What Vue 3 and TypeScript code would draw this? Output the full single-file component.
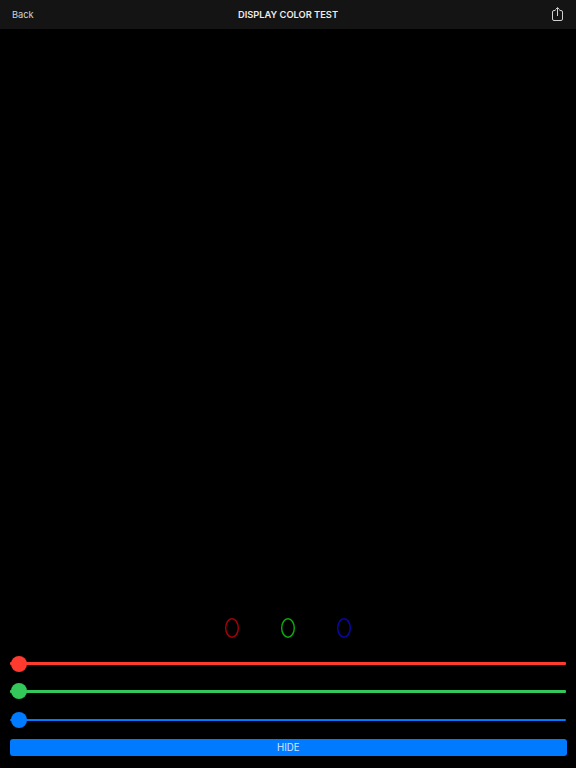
<script setup lang="ts">
const rings = [
  { id: 'red', color: '#a80008' },
  { id: 'green', color: '#0cac10' },
  { id: 'blue', color: '#0808ac' },
]
const sliders = [
  { id: 'red', color: '#ff3b30', h: 3 },
  { id: 'green', color: '#34c759', h: 3 },
  { id: 'blue', color: '#007aff', h: 2 },
]
</script>

<template>
  <div class="page">
    <header class="nav">
      <span class="back">Back</span>
      <span class="title">DISPLAY COLOR TEST</span>
      <svg class="share" width="11" height="14" viewBox="0 0 11 14" fill="none" stroke="#d0d0d0" stroke-width="1">
        <path d="M3.4 3.5H2a1.5 1.5 0 0 0-1.5 1.5v7a1.5 1.5 0 0 0 1.5 1.5h7a1.5 1.5 0 0 0 1.5-1.5V5A1.5 1.5 0 0 0 9 3.5H7.6" />
        <path d="M5.5 9V.8M3.4 2.6 5.5.6l2.1 2" />
      </svg>
    </header>
    <main class="canvas"></main>
    <div class="rings">
      <svg v-for="r in rings" :key="r.id" class="ring" width="14" height="20" viewBox="0 0 14 20">
        <ellipse cx="7" cy="10" rx="6.3" ry="9.2" fill="none" :stroke="r.color" stroke-width="1.4" />
      </svg>
    </div>
    <div class="sliders">
      <div v-for="s in sliders" :key="s.id" class="slider">
        <div class="track" :style="{ background: s.color, height: s.h + 'px' }"></div>
        <div class="thumb" :style="{ background: s.color }"></div>
      </div>
    </div>
    <button class="hide">HIDE</button>
  </div>
</template>

<style>
html, body { margin: 0; background: #000; }
</style>

<style scoped>
.page {
  width: 576px;
  height: 768px;
  background: #000;
  display: flex;
  flex-direction: column;
  overflow: hidden;
  font-family: Inter, "Liberation Sans", sans-serif;
}
.nav {
  height: 29px;
  flex: none;
  box-sizing: border-box;
  background: #141414;
  display: flex;
  align-items: center;
  justify-content: space-between;
  padding: 0 13px 1px 12px;
  position: relative;
}
.back { font-size: 9.3px; color: #d2d2d2; }
.title {
  position: absolute;
  left: 0;
  right: 0;
  text-align: center;
  font-size: 9.3px;
  font-weight: 600;
  color: #ececec;
}
.canvas { flex: 1; }
.rings {
  display: flex;
  justify-content: center;
  gap: 41.7px;
  padding-bottom: 17px;
}
.ring { flex: none; }
.sliders {
  display: flex;
  flex-direction: column;
  gap: 10.3px;
  padding: 0 10px;
}
.slider {
  position: relative;
  height: 17px;
  display: flex;
  align-items: center;
}
.slider:last-child { margin-top: 1.7px; }
.track { width: 100%; border-radius: 1px; }
.thumb {
  position: absolute;
  left: 1px;
  top: 0.3px;
  width: 16px;
  height: 16px;
  border-radius: 50%;
}
.hide {
  margin: 10.5px 9px 12px 9.5px;
  height: 17px;
  border: 0;
  padding: 0;
  border-radius: 3px;
  background: #007aff;
  color: #d4e6ff;
  font-family: inherit;
  font-size: 9.7px;
  flex: none;
}
</style>
